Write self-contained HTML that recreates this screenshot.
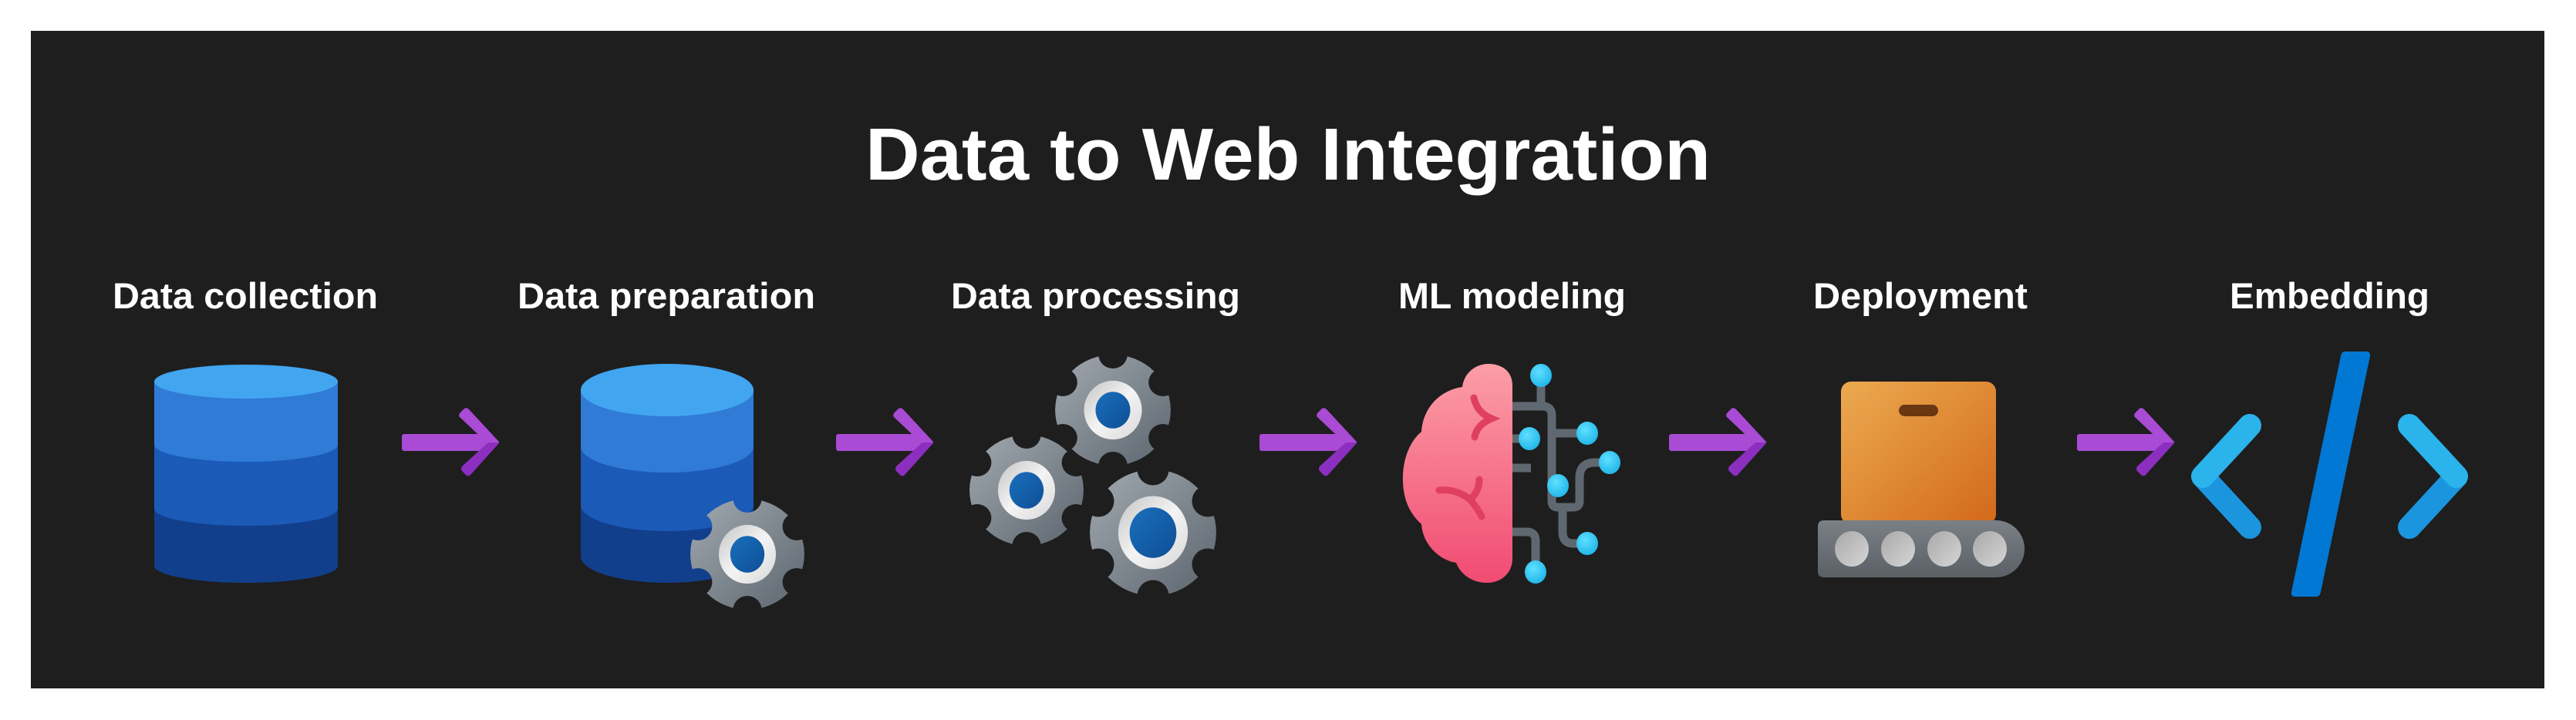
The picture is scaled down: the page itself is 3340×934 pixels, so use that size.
<!DOCTYPE html>
<html><head><meta charset="utf-8"><style>
html,body{margin:0;padding:0;background:#fff;}
svg{display:block;}
text{font-family:"Liberation Sans",sans-serif;font-weight:bold;fill:#fff;}
</style></head><body>
<svg width="3340" height="934" viewBox="0 0 3340 934" xmlns="http://www.w3.org/2000/svg">
<defs>
<linearGradient id="gg" x1="0" y1="0" x2="1" y2="1"><stop offset="0" stop-color="#a2a9b0"/><stop offset="1" stop-color="#5c656e"/></linearGradient>
<linearGradient id="rg" x1="0" y1="0" x2="1" y2="1"><stop offset="0" stop-color="#c4c4c4"/><stop offset=".5" stop-color="#f4f4f4"/><stop offset="1" stop-color="#d8d8d8"/></linearGradient>
<linearGradient id="bl" x1="0" y1="0" x2="1" y2="1"><stop offset="0" stop-color="#1a6fbd"/><stop offset="1" stop-color="#0e4f95"/></linearGradient>
<linearGradient id="brg" x1="0" y1="0" x2="0" y2="1"><stop offset="0" stop-color="#fc9ea6"/><stop offset="1" stop-color="#f14b73"/></linearGradient>
<linearGradient id="box" x1="0" y1="0" x2="1" y2="1"><stop offset="0" stop-color="#ecaa50"/><stop offset="1" stop-color="#d2691a"/></linearGradient>
<linearGradient id="conv" x1="0" y1="0" x2="0" y2="1"><stop offset="0" stop-color="#7a8086"/><stop offset="1" stop-color="#5a6066"/></linearGradient>
<linearGradient id="roll" x1="0" y1="0" x2="1" y2="1"><stop offset="0" stop-color="#a8a8a8"/><stop offset="1" stop-color="#d6d6d6"/></linearGradient>
<radialGradient id="dot" cx=".4" cy=".35" r=".7"><stop offset="0" stop-color="#5fe0ff"/><stop offset="1" stop-color="#1fb4e8"/></radialGradient>
<mask id="gm" maskUnits="userSpaceOnUse" x="-120" y="-120" width="240" height="240">
<circle r="100" fill="#fff"/>
<circle cx="0" cy="-100" r="25" fill="#000"/><circle cx="0" cy="100" r="25" fill="#000"/>
<circle cx="86.6" cy="-50" r="25" fill="#000"/><circle cx="-86.6" cy="-50" r="25" fill="#000"/>
<circle cx="86.6" cy="50" r="25" fill="#000"/><circle cx="-86.6" cy="50" r="25" fill="#000"/>
</mask>
<g id="gear"><circle r="100" fill="url(#gg)" mask="url(#gm)"/><ellipse rx="50" ry="53" fill="url(#rg)"/><ellipse rx="30" ry="33" fill="url(#bl)"/></g>
<g id="arrow">
<rect x="0" y="-11" width="112" height="22" rx="3" fill="#a94bd4"/>
<path d="M75,-33 Q73,-36 76,-39 L81,-44 Q84,-46 87,-43 L125,-2 Q127,0 125,2 L112,2 Z" fill="#a94bd4"/>
<path d="M112,0 L126,0 Q127,0 125,2 L89,42 Q86,45 83,42 L78,37 Q76,34 78,31 Z" fill="#8c2fc0"/>
</g>
</defs>
<rect x="40" y="40" width="3259" height="853" fill="#1e1e1e"/>

<text x="1122" y="233" font-size="96" textLength="1096" lengthAdjust="spacingAndGlyphs">Data to Web Integration</text>
<g font-size="47">
<text x="146" y="400" textLength="344" lengthAdjust="spacingAndGlyphs">Data collection</text>
<text x="671" y="400" textLength="386" lengthAdjust="spacingAndGlyphs">Data preparation</text>
<text x="1233" y="400" textLength="375" lengthAdjust="spacingAndGlyphs">Data processing</text>
<text x="1813" y="400" textLength="295" lengthAdjust="spacingAndGlyphs">ML modeling</text>
<text x="2351" y="400" textLength="278" lengthAdjust="spacingAndGlyphs">Deployment</text>
<text x="2891" y="400" textLength="259" lengthAdjust="spacingAndGlyphs">Embedding</text>
</g>

<!-- DB1 -->
<path d="M200,655 V734 A119,22 0 0 0 438,734 V655 Z" fill="#113f8c"/>
<path d="M200,577 V660 A119,22 0 0 0 438,660 V577 Z" fill="#1c5ab8"/>
<path d="M200,495 V577 A119,22 0 0 0 438,577 V495 Z" fill="#2f7bd6"/>
<ellipse cx="319" cy="495" rx="119" ry="22" fill="#42a5f0"/>
<!-- DB2 -->
<path d="M753,655 V722 A112,34 0 0 0 977,722 V655 Z" fill="#113f8c"/>
<path d="M753,577 V655 A112,34 0 0 0 977,655 V577 Z" fill="#1c5ab8"/>
<path d="M753,506 V579 A112,34 0 0 0 977,579 V506 Z" fill="#2f7bd6"/>
<ellipse cx="865" cy="506" rx="112" ry="34" fill="#42a5f0"/>
<use href="#gear" transform="translate(969,719) scale(0.74,0.72)"/>

<!-- gears -->
<use href="#gear" transform="translate(1443,532) scale(0.75,0.72)"/>
<use href="#gear" transform="translate(1331,636) scale(0.74,0.72)"/>
<g transform="translate(1495,691) scale(0.82,0.82)"><circle r="100" fill="url(#gg)" mask="url(#gm)"/><ellipse rx="55" ry="58" fill="url(#rg)"/><ellipse rx="37" ry="40" fill="url(#bl)"/></g>

<!-- arrows -->
<use href="#arrow" transform="translate(521,574)"/>
<use href="#arrow" transform="translate(1084,574)"/>
<use href="#arrow" transform="translate(1633,574)"/>
<use href="#arrow" transform="translate(2164,574)"/>
<use href="#arrow" transform="translate(2693,574)"/>

<!-- brain -->
<path d="M1961,500 C1961,480 1945,472 1930,472 C1912,472 1898,485 1896,502 C1868,506 1845,528 1843,560 C1826,574 1818,600 1819,625 C1820,652 1830,668 1843,680 C1845,708 1868,727 1888,730 C1895,748 1912,756 1928,756 C1948,756 1961,742 1961,725 Z" fill="url(#brg)"/>
<g stroke="#e0405f" stroke-width="9" fill="none" stroke-linecap="round">
<path d="M1911,516 C1914,530 1922,538 1934,543 C1922,548 1914,556 1912,567"/>
<path d="M1866,636 C1882,634 1896,640 1906,648 C1913,656 1918,664 1921,670"/>
<path d="M1918,622 C1918,634 1913,642 1906,648"/>
</g>
<g stroke="#5f6870" stroke-width="11" fill="none" stroke-linejoin="round">
<path d="M1998,487 V527"/>
<path d="M1961,527 H2000 Q2012,527 2012,539 V650 Q2012,658 2020,658 H2040 Q2048,658 2048,650 V620 Q2048,600 2068,600 H2087"/>
<path d="M2012,562 H2058"/>
<path d="M1961,569 H1983"/>
<path d="M1961,607 H1985"/>
<path d="M2026,658 V690 Q2026,705 2040,705 H2058"/>
<path d="M1961,690 H1980 Q1991,690 1991,702 V742"/>
</g>
<g fill="url(#dot)">
<ellipse cx="1998" cy="487" rx="14" ry="15"/><ellipse cx="1983" cy="569" rx="14" ry="15"/>
<ellipse cx="2058" cy="562" rx="14" ry="15"/><ellipse cx="2087" cy="600" rx="14" ry="15"/>
<ellipse cx="2020" cy="630" rx="14" ry="15"/><ellipse cx="2058" cy="705" rx="14" ry="15"/>
<ellipse cx="1991" cy="742" rx="14" ry="15"/>
</g>

<!-- deployment -->
<rect x="2387" y="495" width="201" height="185" rx="13" fill="url(#box)"/>
<rect x="2462" y="525" width="51" height="15" rx="7.5" fill="#6a3712"/>
<path d="M2365,675 H2588 A37,37 0 0 1 2588,749 H2365 Q2357,749 2357,741 V683 Q2357,675 2365,675 Z" fill="url(#conv)"/>
<g fill="url(#roll)">
<ellipse cx="2401" cy="712" rx="22" ry="23"/><ellipse cx="2461" cy="712" rx="22" ry="23"/>
<ellipse cx="2521" cy="712" rx="22" ry="23"/><ellipse cx="2580" cy="712" rx="22" ry="23"/>
</g>

<!-- code -->
<path d="M3040,456 H3068 Q3074,456 3073,462 L3009,768 Q3008,774 3002,774 H2976 Q2970,774 2971,768 L3035,462 Q3036,456 3040,456 Z" fill="#0078d4"/>
<g stroke-width="30" stroke-linecap="round" fill="none">
<line x1="2858" y1="620" x2="2917" y2="684" stroke="#1b95dd"/>
<line x1="2917" y1="552" x2="2856" y2="618" stroke="#2bb3ec"/>
<line x1="3183" y1="620" x2="3124" y2="684" stroke="#1b95dd"/>
<line x1="3124" y1="552" x2="3185" y2="618" stroke="#2bb3ec"/>
</g>
</svg>
</body></html>
